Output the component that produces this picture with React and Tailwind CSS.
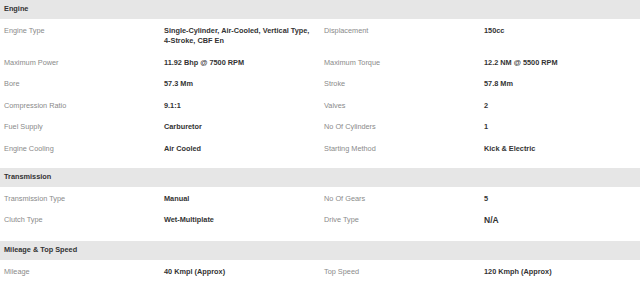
import React from "react";

const sections = [
  {
    title: "Engine",
    rows: [
      ["Engine Type", "Single-Cylinder, Air-Cooled, Vertical Type, 4-Stroke, CBF En", "Displacement", "150cc"],
      ["Maximum Power", "11.92 Bhp @ 7500 RPM", "Maximum Torque", "12.2 NM @ 5500 RPM"],
      ["Bore", "57.3 Mm", "Stroke", "57.8 Mm"],
      ["Compression Ratio", "9.1:1", "Valves", "2"],
      ["Fuel Supply", "Carburetor", "No Of Cylinders", "1"],
      ["Engine Cooling", "Air Cooled", "Starting Method", "Kick & Electric"],
    ],
    gap: "mb-[9.5px]",
  },
  {
    title: "Transmission",
    rows: [
      ["Transmission Type", "Manual", "No Of Gears", "5"],
      ["Clutch Type", "Wet-Multiplate", "Drive Type", "N/A"],
    ],
    gap: "mb-[11px]",
  },
  {
    title: "Mileage & Top Speed",
    rows: [["Mileage", "40 Kmpl (Approx)", "Top Speed", "120 Kmph (Approx)"]],
    gap: "",
  },
];

function Label({ children }) {
  return <div className="px-[4px] pt-[6.5px] pb-[4.5px] leading-[10.5px] text-[#8a8a8a]">{children}</div>;
}

function Value({ children }) {
  const big = children === "N/A";
  return (
    <div
      className={
        "px-[4px] pt-[6.5px] pb-[4.5px] leading-[10.5px] font-bold text-[#333333] pr-[10px] " +
        (big ? "text-[8.5px]" : "")
      }
    >
      {children}
    </div>
  );
}

export default function App() {
  return (
    <div
      className="w-[640px] h-[289px] overflow-hidden bg-white text-[7.33px]"
      style={{ fontFamily: '"Liberation Sans", Arial, sans-serif' }}
    >
      {sections.map((s) => (
        <div key={s.title} className={s.gap}>
          <div className="h-[19px] bg-[#e6e6e6] flex items-center px-[4px] font-bold text-[#333333]">
            {s.title}
          </div>
          {s.rows.map((r, i) => (
            <div key={i} className="grid grid-cols-[160px_160px_160px_160px]">
              <Label>{r[0]}</Label>
              <Value>{r[1]}</Value>
              <Label>{r[2]}</Label>
              <Value>{r[3]}</Value>
            </div>
          ))}
        </div>
      ))}
    </div>
  );
}
